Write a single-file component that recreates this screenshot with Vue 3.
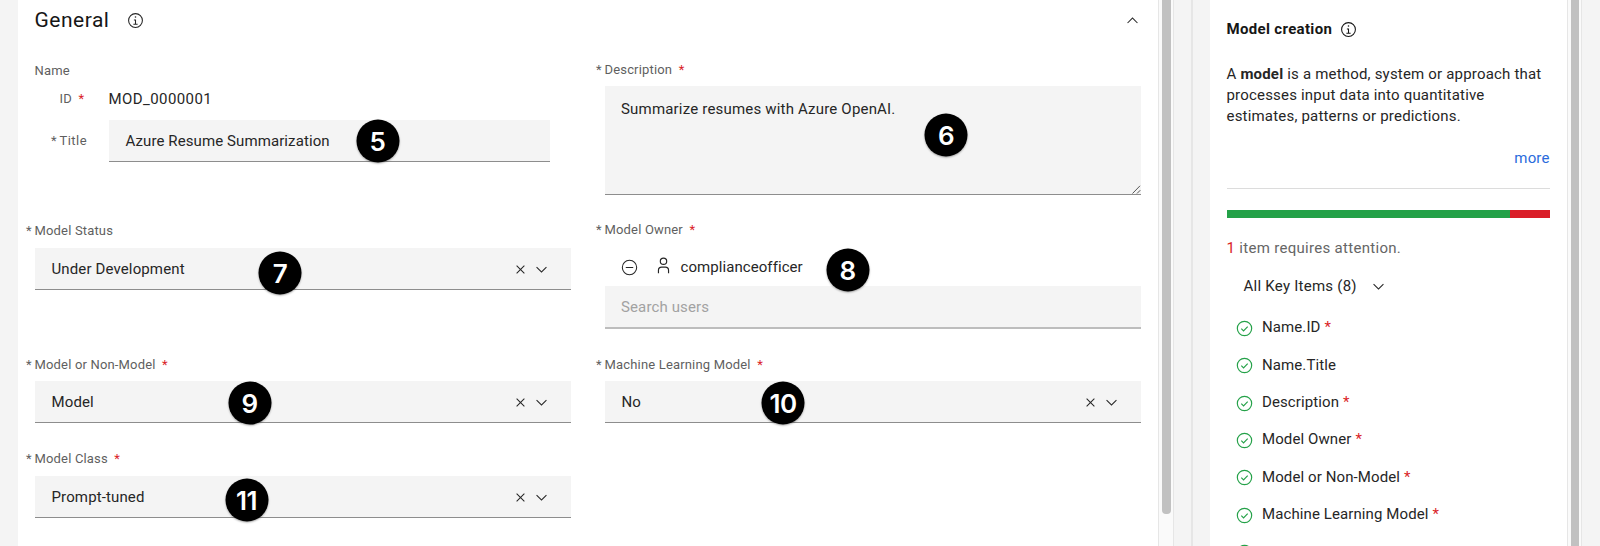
<script setup>
import { h } from 'vue'

const Info = () => h('svg', { class: 'icon-info', viewBox: '0 0 32 32', width: 17, height: 17, fill: 'currentColor' }, [
  h('path', { d: 'M17 22V14h-4v2h2v6h-3v2h8v-2zM16 8a1.5 1.5 0 1 0 1.5 1.5A1.5 1.5 0 0 0 16 8z' }),
  h('path', { d: 'M16 30a14 14 0 1 1 14-14 14 14 0 0 1-14 14zm0-26a12 12 0 1 0 12 12A12 12 0 0 0 16 4z' }),
])
const Chevron = () => h('svg', { viewBox: '0 0 16 16', width: 17, height: 17, fill: 'currentColor' }, [
  h('path', { d: 'M8 11 3 6l.7-.7L8 9.6l4.3-4.3.7.7z' }),
])
const Close = () => h('svg', { viewBox: '0 0 32 32', width: 17, height: 17, fill: 'currentColor' }, [
  h('path', { d: 'M24 9.4 22.6 8 16 14.6 9.4 8 8 9.4l6.6 6.6L8 22.6 9.4 24l6.6-6.6 6.6 6.6 1.4-1.4-6.6-6.6z' }),
])

const selects = [
  { label: 'Model Status', req: false, value: 'Under Development', cls: 'status' },
  { label: 'Model or Non-Model', req: true, value: 'Model', cls: 'kind' },
  { label: 'Machine Learning Model', req: true, value: 'No', cls: 'ml' },
  { label: 'Model Class', req: true, value: 'Prompt-tuned', cls: 'klass' },
]
const badges = [
  { n: 5, x: 377.5, y: 141 },
  { n: 6, x: 946, y: 134.5 },
  { n: 7, x: 280, y: 273 },
  { n: 8, x: 847.5, y: 270 },
  { n: 9, x: 249.5, y: 403.3 },
  { n: 10, x: 783, y: 403.3 },
  { n: 11, x: 246.5, y: 499.5 },
]
const items = [
  { t: 'Name.ID', req: true },
  { t: 'Name.Title', req: false },
  { t: 'Description', req: true },
  { t: 'Model Owner', req: true },
  { t: 'Model or Non-Model', req: true },
  { t: 'Machine Learning Model', req: true },
  { t: 'Model Class', req: true },
]
</script>

<template>
  <div class="page">
    <main class="panel">
      <header class="head">
        <h2>General</h2>
        <Info />
        <Chevron class="collapse" />
      </header>
      <div class="form">
        <section class="name">
          <div class="label">Name</div>
          <div class="id-row">
            <span class="label">ID<i class="req">*</i></span>
            <span class="id">MOD_0000001</span>
          </div>
          <div class="title-row">
            <span class="label"><i class="lead">*</i>Title</span>
            <div class="field">Azure Resume Summarization</div>
          </div>
        </section>
        <section class="desc">
          <div class="label"><i class="lead">*</i>Description<i class="req">*</i></div>
          <div class="area">
            <span>Summarize resumes with Azure OpenAI.</span>
            <svg class="grip" width="9" height="9" viewBox="0 0 9 9" fill="none" stroke="#555" stroke-width="1"><path d="M.5 8.5 8 .8M5 8.5 8.3 5.2" /></svg>
          </div>
        </section>
        <section class="owner">
          <div class="label"><i class="lead">*</i>Model Owner<i class="req">*</i></div>
          <div class="user">
            <svg class="minus" width="17" height="17" viewBox="0 0 32 32" fill="none" stroke="currentColor" stroke-width="2"><circle cx="16" cy="16" r="13.5" /><path d="M9 16h14" /></svg>
            <svg class="person" width="17" height="17" viewBox="0 0 32 32" fill="none" stroke="currentColor" stroke-width="2.2"><circle cx="16" cy="8" r="6" /><path d="M6.500 30.500v-5.500a6 6 0 0 1 6-6h7a6 6 0 0 1 6 6v5.500" /></svg>
            <span>complianceofficer</span>
          </div>
          <div class="field search">Search users</div>
        </section>
        <section v-for="s in selects" :key="s.label" :class="s.cls">
          <div class="label"><i class="lead">*</i>{{ s.label }}<i v-if="s.req" class="req">*</i></div>
          <div class="field select">
            <span>{{ s.value }}</span>
            <Close class="clear" />
            <Chevron />
          </div>
        </section>
      </div>
    </main>
    <div class="track"><div class="thumb short"></div></div>
    <div class="gutter"></div>
    <aside class="side">
      <div class="side-head"><b>Model creation</b><Info /></div>
      <p>A <b>model</b> is a method, system or approach that<br>processes input data into quantitative<br>estimates, patterns or predictions.</p>
      <a class="more">more</a>
      <div class="bar"><div class="done"></div><div class="todo"></div></div>
      <div class="attention"><em>1</em> item requires attention.</div>
      <div class="filter"><span>All Key Items (8)</span><Chevron /></div>
      <ul>
        <li v-for="it in items" :key="it.t">
          <svg width="17" height="17" viewBox="0 0 32 32" fill="none" stroke="#24a148" stroke-width="2.2"><circle cx="16" cy="16" r="13.5" /><path d="m10 16.2 4.2 4.2L22 12.6" /></svg>
          <span>{{ it.t }}<i v-if="it.req" class="star">*</i></span>
        </li>
      </ul>
    </aside>
    <div class="track right"><div class="thumb"></div></div>
    <div v-for="b in badges" :key="b.n" class="badge" :style="{ left: b.x + 'px', top: b.y + 'px' }">{{ b.n }}</div>
  </div>
</template>

<style>
html, body { margin: 0; overflow: hidden; background: #f4f4f4; }
</style>

<style scoped>
* { box-sizing: border-box; }
.page { position: relative; display: flex; width: 1600px; height: 546px; padding-left: 17.5px; overflow: hidden; background: #f4f4f4; color: #262626; font: 15px/21px Roboto, "Noto Sans", sans-serif; letter-spacing: .13px; white-space: nowrap; }
svg { display: block; flex: none; }
i, em { font-style: normal; }
.panel { width: 1140.5px; padding: 0 17px; background: #fff; }
.head { display: flex; align-items: center; height: 40px; }
.head h2 { margin: 0; width: 92.5px; font-size: 21px; font-weight: 400; letter-spacing: .5px; color: #161616; }
.collapse { margin-left: auto; transform: rotate(180deg); }
.form { display: grid; grid-template-columns: 536.5px 536.5px; column-gap: 33.5px; grid-template-rows: 160px 135px 95px 90px; padding-top: 21px; }
.label { display: block; height: 18px; line-height: 18px; font-size: 13px; letter-spacing: .17px; color: #5f5f5f; }
.lead { display: inline-block; width: 8.5px; margin-left: -8.5px; letter-spacing: 0; }
.req { margin-left: 6.5px; color: #da1e28; letter-spacing: 0; }
.name { grid-area: 1 / 1; padding-top: 1px; }
.id-row { display: flex; align-items: center; height: 20px; margin-top: 8.5px; }
.id-row .label { width: 74px; padding-left: 25px; }
.id { line-height: 20px; letter-spacing: .42px; }
.title-row { display: flex; align-items: center; margin-top: 11.5px; }
.title-row .label { width: 74px; padding-left: 25px; letter-spacing: .45px; }
.title-row .field { width: 441.5px; margin: 0; letter-spacing: .1px; }
.field { display: flex; align-items: center; height: 42px; margin-top: 7px; padding: 1px 17px 0; border-bottom: 1px solid #8d8d8d; background: #f4f4f4; }
.desc { grid-area: 1 / 2; }
.area { position: relative; height: 109px; margin-top: 7px; padding: 12.5px 16.5px; border-bottom: 1px solid #8d8d8d; background: #f4f4f4; letter-spacing: .19px; }
.grip { position: absolute; right: 0; bottom: 0; }
.owner { grid-area: 2 / 2; }
.user { display: flex; align-items: center; height: 47px; padding: 9px 0 0 16.5px; letter-spacing: .07px; }
.person { margin: -3px 8.5px 0 17px; }
.search { height: 43px; margin-top: 0; padding-left: 16.5px; border-bottom: 2px solid #bdbdbd; color: #a2a2a2; }
.status { grid-area: 2 / 1; padding-top: 1px; }
.status .field { margin-top: 8px; }
.kind { grid-area: 3 / 1; }
.ml { grid-area: 3 / 2; }
.klass { grid-area: 4 / 1; }
.klass .label { margin-top: -.6px; }
.klass .field { margin-top: 7.6px; }
.select { padding-right: 21px; }
.clear { margin: 0 4.5px 0 auto; }
.track { width: 15.5px; padding: 0 2px 0 3px; border: solid #e6e6e6; border-width: 0 1px; background: #fafafa; }
.thumb { height: 100%; background: #c1c1c1; }
.thumb.short { height: 514px; border-radius: 0 0 4px 4px; }
.gutter { width: 19px; margin-right: 17px; border-right: 2px solid #e6e6e6; }
.side { width: 357px; padding: 18.5px 17px 0; background: #fff; }
.side-head { display: flex; align-items: center; gap: 8px; height: 21px; letter-spacing: .33px; color: #161616; }
.side-head svg { margin-top: 1px; }
b { font-weight: 700; }
p { margin: 24px 0 0; line-height: 21.2px; letter-spacing: .19px; }
.more { display: block; height: 41px; margin-top: 20.5px; text-align: right; color: #2a6bdc; border-bottom: 1px solid #dcdcdc; }
.bar { display: flex; height: 8.5px; margin-top: 21px; }
.done { width: 283px; background: #24a148; }
.todo { flex: 1; background: #da1e28; }
.attention { margin-top: 19.5px; letter-spacing: .3px; color: #666; }
em { color: #da1e28; }
.filter { display: flex; align-items: center; gap: 13px; height: 21px; margin-top: 17px; padding-left: 17px; letter-spacing: .25px; }
ul { margin: 12px 0 0; padding: 0 0 0 9.5px; list-style: none; }
li { display: flex; align-items: center; gap: 9px; height: 37.4px; letter-spacing: .1px; }
li span { margin-top: 1px; }
li svg { margin-top: 2px; }
.star { margin-left: 4px; color: #da1e28; }
.badge { position: absolute; display: flex; align-items: center; justify-content: center; width: 43px; height: 43px; border-radius: 50%; background: #000; color: #fff; font: 600 26px/43px Inter, sans-serif; letter-spacing: -.5px; transform: translate(-50%, -50%); box-shadow: 0 1px 2px rgba(0, 0, 0, .35); }
</style>
